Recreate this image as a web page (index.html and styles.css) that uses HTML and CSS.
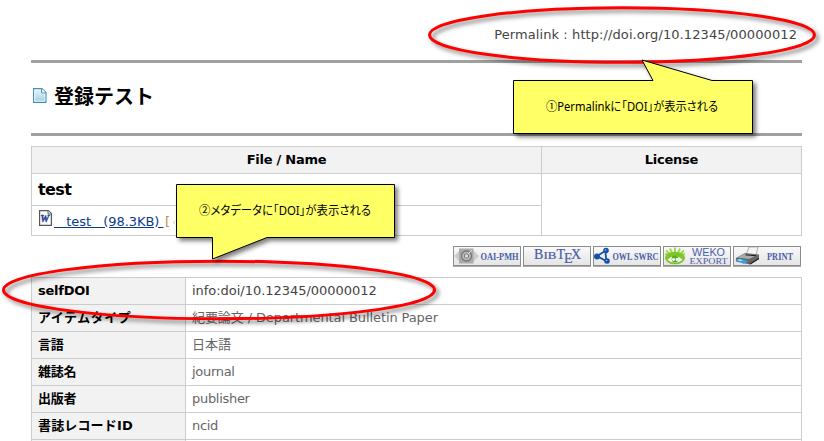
FILE: index.html
```html
<!DOCTYPE html>
<html lang="ja">
<head>
<meta charset="utf-8">
<title>登録テスト</title>
<link rel="stylesheet" href="styles.css">
</head>
<body>
<main class="page">
  <div class="permalink"><span>Permalink : http://doi.org/10.12345/00000012</span></div>
  <header class="title-bar">
    <svg class="doc-icon" width="14" height="17" viewBox="0 0 14 17">
      <defs><linearGradient id="doc" x1="0" y1="0" x2="0" y2="1"><stop offset="0" stop-color="#e6f3f8"/><stop offset="1" stop-color="#a5d3e5"/></linearGradient></defs>
      <path d="M.6 1.6H9L13 5.6V15.4H.6Z" fill="#fff" stroke="#3f8dbd" stroke-width="1.1"/>
      <path d="M2.2 3H8V7H11.6V13.8H2.2Z" fill="url(#doc)"/>
      <path d="M8.6 1.6V6H13" fill="#fff" stroke="#3f8dbd"/>
    </svg>
    <h1>登録テスト</h1>
  </header>

  <section class="files">
    <div class="head">File / Name</div>
    <div class="head">License</div>
    <div class="file-title">test</div>
    <div class="license"></div>
    <div class="file-link">
      <svg width="13" height="17" viewBox="0 0 13 17">
        <path d="M.6 .6H9.4L12.4 3.6V15.4H.6Z" fill="#fff" stroke="#555" stroke-width="1.2"/>
        <path d="M9 .6V4H12.4" fill="#ddd" stroke="#666"/>
        <text x="1.2" y="12.4" class="word-mark">W</text>
      </svg>
      <a class="name">&nbsp;&nbsp;&nbsp;test&nbsp;&nbsp;&nbsp;(98.3KB)&nbsp;</a><span class="bracket">[</span><span class="dot"></span>
    </div>
  </section>

  <nav class="buttons">
    <svg class="btn" viewBox="0 0 68 20">
      <path d="M1 10 7 4V16ZM26 10 20 4V16Z" fill="#ccc"/>
      <rect x="6" y="2.5" width="14.5" height="15" fill="#aaa"/>
      <circle cx="13.5" cy="10" r="5" fill="#bbb" stroke="#777" stroke-width="1.3"/>
      <circle cx="13.5" cy="10" r="2.2" fill="#ddd" stroke="#777"/>
      <path d="M15 8 19 4" stroke="#ddd"/>
      <text x="27.5" y="14" class="serif bold" textLength="38" lengthAdjust="spacingAndGlyphs" font-size="9.5">OAI-PMH</text>
    </svg>
    <svg class="btn" viewBox="0 0 68 20">
      <text y="13" class="serif bib" font-size="14"><tspan x="11">B</tspan><tspan x="20.5" font-size="11" textLength="13" lengthAdjust="spacingAndGlyphs">IB</tspan><tspan x="33.5" y="13">T</tspan><tspan x="41" y="16.5">E</tspan><tspan x="48" y="13">X</tspan></text>
    </svg>
    <svg class="btn" viewBox="0 0 68 20">
      <path d="M4 10 13 4.5Q12 10 14 15.5Z" fill="none" stroke="#1350a8" stroke-width="1.8"/>
      <circle cx="4" cy="10.5" r="3" fill="#1350a8"/><circle cx="13" cy="4.5" r="2.8" fill="#1350a8"/><circle cx="14" cy="15" r="2.8" fill="#1350a8"/>
      <circle cx="12.5" cy="4" r=".8" fill="#9bc0ee"/><circle cx="13.5" cy="14.5" r=".8" fill="#9bc0ee"/>
      <text x="19.5" y="14" class="serif bold" textLength="46" lengthAdjust="spacingAndGlyphs" font-size="9.5">OWL SWRC</text>
    </svg>
    <svg class="btn" viewBox="0 0 68 20">
      <path d="M2 8 6 9M3 4.5 7 8M7 2.5 9 7M12 1.5V7M17 2.5 15 7M21 4.5 17 8M22 8 18 9" stroke="#a5d84c" stroke-width="2" fill="none"/>
      <ellipse cx="12" cy="12" rx="10" ry="6.3" fill="#7cc62c"/>
      <path d="M4.5 13.5Q12 7 19.5 13.5Q17 16.5 12 16.5T4.5 13.5" fill="#fff"/>
      <circle cx="12" cy="13" r="3.4" fill="#5dac24"/><circle cx="10.5" cy="13.5" r="1.4" fill="#fff"/><circle cx="14" cy="13.5" r="1.4" fill="#fff"/>
      <text x="29" y="9.7" class="sans" textLength="33" lengthAdjust="spacingAndGlyphs" font-size="10">WEKO</text>
      <text x="26.5" y="17.7" class="serif" textLength="38" lengthAdjust="spacingAndGlyphs" font-size="8.5">EXPORT</text>
    </svg>
    <svg class="btn" viewBox="0 0 68 20">
      <path d="M13 9 16 1 25 .8 23 9Z" fill="#f4f4f4" stroke="#999" stroke-width=".8"/>
      <path d="M3 12 12 7 26 8.5V13L17 18.5 3 15.5Z" fill="#666"/>
      <path d="M4 11.5 12 7.5 25 9 16 13Z" fill="#aaa"/>
      <path d="M13 8.2 24 9 22 10.2 12 9.2Z" fill="#222"/>
      <path d="M2 14 7 12.5 15 15 11 18Z" fill="#35a4dd"/><path d="M4 14.3 7 13.2 10 15Z" fill="#e4f5ff"/>
      <path d="M17 18 26 12.5" stroke="#222" stroke-width="1.3"/>
      <text x="34" y="14" class="serif bold" textLength="26" lengthAdjust="spacingAndGlyphs" font-size="9.5">PRINT</text>
    </svg>
  </nav>

  <section class="meta">
    <div class="key">selfDOI</div><div class="val dark">info:doi/10.12345/00000012</div>
    <div class="key kana">アイテムタイプ</div><div class="val tight">紀要論文 / Departmental Bulletin Paper</div>
    <div class="key">言語</div><div class="val">日本語</div>
    <div class="key">雑誌名</div><div class="val narrow">journal</div>
    <div class="key">出版者</div><div class="val narrow">publisher</div>
    <div class="key record">書誌レコードID</div><div class="val narrow">ncid</div>
    <div class="key"></div><div class="val"></div>
  </section>
</main>

<svg class="notes" width="824" height="441" viewBox="0 0 824 441">
  <g class="ring">
    <ellipse cx="622" cy="35" rx="192.5" ry="27.3"/>
    <ellipse cx="219" cy="290" rx="215.5" ry="28.8"/>
  </g>
  <g class="callout">
    <path d="M513.5 80.5H653L642 60L712 80.5H752.5V133.5H513.5Z"/>
    <path d="M176.5 184.5H394.5V237.5H267L212.5 259V237.5H176.5Z"/>
  </g>
  <g class="callout-text">
    <text x="546" y="111" textLength="172" lengthAdjust="spacingAndGlyphs">①Permalinkに「DOI」が表示される</text>
    <text x="199" y="215" textLength="172" lengthAdjust="spacingAndGlyphs">②メタデータに「DOI」が表示される</text>
  </g>
</svg>
</body>
</html>
```
FILE: styles.css
```css
* { box-sizing: border-box; }
body {
  margin: 0;
  width: 824px;
  height: 441px;
  overflow: hidden;
  position: relative;
  background: #fff;
  color: #000;
  font: 13px/26px "DejaVu Sans", "Noto Sans CJK JP", sans-serif;
}
.page { width: 771px; height: 441px; margin-left: 31px; }
.permalink { height: 60px; padding: 22px 5px 0 0; text-align: right; color: #444; letter-spacing: .09px; }
.title-bar {
  height: 76px;
  border-top: 3px solid #a0a0a0;
  border-bottom: 3px solid #a0a0a0;
  display: flex;
  padding: 23px 0 0 2px;
}
.doc-icon { margin-top: 1px; }
h1 { margin: -4px 0 0 7px; font: bold 20px/28px "Noto Sans CJK JP", sans-serif; }

.files {
  margin-top: 10px;
  display: grid;
  grid-template-columns: 509px 259px;
  grid-template-rows: 26px 31px 29px;
  gap: 1px;
  padding: 1px;
  background: #ccc;
}
.files > div { background: #fff; }
.files > .head { background: #f2f2f2; text-align: center; font-weight: bold; letter-spacing: -.25px; }
.file-title { padding-left: 6px; font-weight: bold; font-size: 16px; line-height: 31px; letter-spacing: -.6px; }
.files > .license { grid-column: 2; grid-row: 2 / 4; }
.file-link { display: flex; padding: 4px 0 0 7px; line-height: 24px; }
.name { margin-left: 2px; width: 111px; color: #0b3a8c; text-decoration: underline; letter-spacing: -.05px; white-space: nowrap; }
.bracket { color: #c08850; margin-left: 0; }
.dot { width: 2px; height: 3px; margin: 11px 0 0 3px; background: #f7e3cc; }
.word-mark { font: italic bold 10px "Liberation Serif", serif; fill: #1d3f94; stroke: #1d3f94; stroke-width: .4px; }

.buttons { display: flex; justify-content: flex-end; gap: 2px; margin: 10px 1px 0 0; height: 31px; }
.btn { width: 68px; height: 20px; background: linear-gradient(#fafafa, #e4e4e4); outline: 1px solid #8d8d8d; outline-offset: -1px; box-shadow: 0 1px 0 #aaa; }
.serif { font-family: "Liberation Serif", serif; fill: #4a5ea8; }
.bold { font-weight: bold; }
.bib { stroke: #4a5ea8; stroke-width: .2px; }
.sans { font-family: "Liberation Sans", sans-serif; fill: #4a5ea8; }

.meta {
  display: grid;
  grid-template-columns: 153px 615px;
  grid-template-rows: repeat(6, 26px) 1px;
  gap: 1px;
  padding: 1px 1px 0;
  background: #ccc;
}
.key { background: #f2f2f2; padding-left: 6px; font-weight: bold; letter-spacing: -.25px; }
.key.kana { letter-spacing: .5px; }
.key.record { letter-spacing: .15px; }
.val { background: #fff; padding-left: 6px; color: #666; }
.val.dark { color: #444; letter-spacing: -.03px; }
.val.tight { letter-spacing: -.1px; }
.val.narrow { letter-spacing: -.3px; }

.notes { position: absolute; left: 0; top: 0; }
.ring { fill: none; stroke: #f00; stroke-width: 3; filter: drop-shadow(3px 3px 2px rgba(0, 0, 0, .5)); }
.callout { fill: #ff6; stroke: #000; stroke-width: 1; filter: drop-shadow(3px 3px 2px rgba(0, 0, 0, .5)); }
.callout-text { font: 12px "Noto Sans", "Noto Sans CJK JP", sans-serif; font-feature-settings: "palt"; fill: #000; }
```
